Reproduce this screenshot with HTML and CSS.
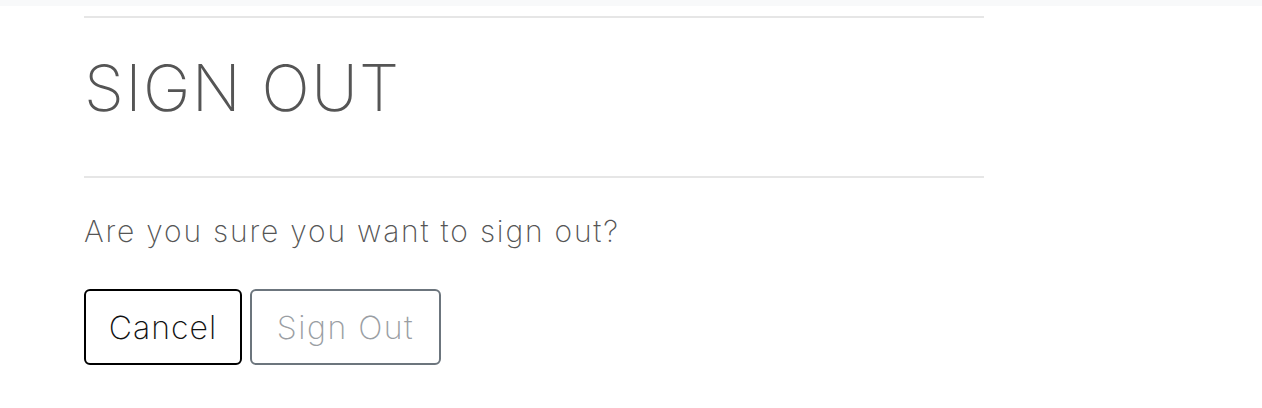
FILE: index.html
```html
<!DOCTYPE html>
<html lang="en">
<head>
<meta charset="utf-8">
<title>Sign Out</title>
<link rel="stylesheet" href="styles.css">
</head>
<body>
<div class="topbar"></div>
<main class="main">
  <hr class="rule rule-top">
  <h1 class="title">SIGN OUT</h1>
  <hr class="rule rule-mid">
  <p class="question">Are you sure you want to sign out?</p>
  <div class="actions">
    <button class="btn btn-cancel" type="button">Cancel</button>
    <button class="btn btn-signout" type="button">Sign Out</button>
  </div>
</main>
</body>
</html>
```
FILE: styles.css
```css
html, body {
  margin: 0;
  padding: 0;
  background: #ffffff;
}
body {
  font-family: Inter, "Open Sans", sans-serif;
  font-weight: 200;
}
.topbar {
  height: 6px;
  background: #f8f9fa;
}
.main {
  width: 900px;
  margin-left: 84px;
}
.rule {
  border: 0;
  border-top: 2px solid #e6e6e6;
  margin: 0;
}
.rule-top {
  margin-top: 10px;
}
.title {
  margin: 0;
  padding: 32px 0 0;
  height: 158px;
  box-sizing: border-box;
  font-size: 64px;
  line-height: 76px;
  font-weight: 200;
  color: #555555;
  letter-spacing: 1.4px;
}
.question {
  margin: 0;
  padding-top: 33px;
  font-size: 30px;
  line-height: 40px;
  font-weight: 200;
  color: #555555;
  letter-spacing: 1.8px;
}
.actions {
  display: flex;
  gap: 8px;
  margin-top: 38px;
}
.btn {
  font-family: inherit;
  font-weight: 200;
  font-size: 32px;
  height: 76px;
  padding: 0;
  background: #ffffff;
  border-radius: 6px;
  box-sizing: border-box;
  letter-spacing: 1px;
}
.btn-cancel {
  width: 158px;
  border: 2px solid #000000;
  color: #111111;
}
.btn-signout {
  width: 191px;
  border: 2px solid #6c757d;
  color: #9a9ea3;
  letter-spacing: 1.5px;
}
```
